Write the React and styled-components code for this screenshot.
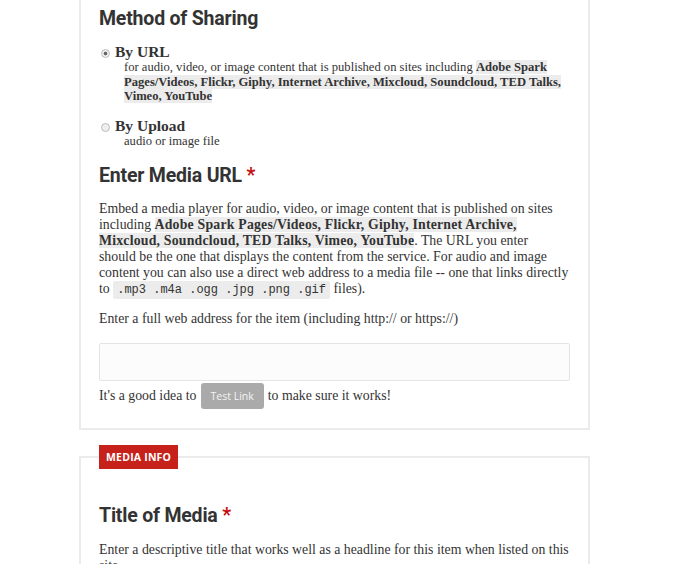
import React from "react";
import styled, { createGlobalStyle } from "styled-components";

const Global = createGlobalStyle`
  body {
    margin: 0;
    background: #fff;
    font-family: "Liberation Serif", "DejaVu Serif", serif;
    color: #333;
  }
`;

const Page = styled.div`
  width: 511px;
  margin: -34px 0 0 79px;
  display: flex;
  flex-direction: column;
  gap: 26px;
`;

const Card = styled.section`
  position: relative;
  border: 2px solid #ebebeb;
  padding: ${(p) => p.$pad || "20px 18px 18px 18px"};
`;

const Label = styled.div`
  position: absolute;
  top: -13px;
  left: 18px;
  background: #c7211b;
  color: #fff;
  font-family: "Open Sans", "Noto Sans", sans-serif;
  font-weight: 700;
  font-size: 10.5px;
  letter-spacing: 0.2px;
  padding: 0 7px;
  height: 24px;
  line-height: 24px;
`;

const Heading = styled.h2`
  font-family: Roboto, "Noto Sans", sans-serif;
  font-weight: 700;
  font-size: 19.5px;
  letter-spacing: -0.2px;
  color: #333;
  margin: ${(p) => p.$margin || "0 0 12px 0"};
  line-height: 26px;
`;

const Req = styled.span`
  color: #c40d0d;
`;

const Options = styled.div`
  display: flex;
  flex-direction: column;
  gap: 14px;
  margin-bottom: 15px;
`;

const Option = styled.label`
  display: grid;
  grid-template-columns: 14px 1fr;
  column-gap: 2px;
`;

const Radio = styled.span`
  width: 7px;
  height: 7px;
  margin: 5px 0 0 2px;
  border-radius: 50%;
  border: 1px solid #bbb;
  background: ${(p) => (p.$on ? "radial-gradient(circle, #666 0 1.6px, #eee 2.2px)" : "#eee")};
`;

const OptTitle = styled.div`
  font-weight: 700;
  font-size: 15.5px;
  line-height: 16px;
  color: #333;
`;

const OptHint = styled.div`
  grid-column: 2;
  padding-left: 9px;
  font-size: 12.6px;
  line-height: 14.5px;
  color: #333;
`;

const Mark = styled.strong`
  background: #ececec;
  font-weight: 700;
  letter-spacing: ${(p) => p.$spread || "0"};
`;

const Para = styled.p`
  margin: 0 0 ${(p) => p.$mb || "14px"} 0;
  font-size: 13.8px;
  line-height: 16px;
  color: #333;
  white-space: ${(p) => (p.$lines ? "nowrap" : "normal")};
`;

const Code = styled.code`
  font-family: "Liberation Mono", "DejaVu Sans Mono", monospace;
  font-size: 12px;
  background: #ececec;
  padding: 2px 4px;
  border-radius: 2px;
`;

const Input = styled.input`
  display: block;
  box-sizing: border-box;
  width: 100%;
  height: 38px;
  border: 1px solid #e4e4e4;
  border-radius: 2px;
  background: #fcfcfc;
  margin: 0 0 2px 0;
`;

const Row = styled.div`
  display: flex;
  align-items: center;
  gap: 4px;
  font-size: 13.8px;
  color: #333;
`;

const Button = styled.button`
  background: #aaaaaa;
  color: #f4f4f4;
  border: none;
  border-radius: 3px;
  font-family: "Open Sans", "Noto Sans", sans-serif;
  font-size: 10.5px;
  height: 26px;
  padding: 0 10px;
`;

const services = "Adobe Spark Pages/Videos, Flickr, Giphy, Internet Archive, Mixcloud, Soundcloud, TED Talks, Vimeo, YouTube";

export default function App() {
  return (
    <>
      <Global />
      <Page>
        <Card $pad="38px 18px 19px 18px">
          <Heading $margin="0 0 12px 0">Method of Sharing</Heading>
          <Options>
            <Option>
              <Radio $on />
              <OptTitle>By URL</OptTitle>
              <OptHint>
                for audio, video, or image content that is published on sites including <Mark>{services}</Mark>
              </OptHint>
            </Option>
            <Option>
              <Radio />
              <OptTitle>By Upload</OptTitle>
              <OptHint>audio or image file</OptHint>
            </Option>
          </Options>
          <Heading $margin="0 0 12px 0">
            Enter Media URL <Req>*</Req>
          </Heading>
          <Para $mb="13px" $lines>
            Embed a media player for audio, video, or image content that is published on sites
            <br />
            including <Mark $spread="0.2px">Adobe Spark Pages/Videos, Flickr, Giphy, Internet Archive,</Mark>
            <br />
            <Mark $spread="0.2px">Mixcloud, Soundcloud, TED Talks, Vimeo, YouTube</Mark>. The URL you enter
            <br />
            should be the one that displays the content from the service. For audio and image
            <br />
            content you can also use a direct web address to a media file -- one that links directly
            <br />
            to <Code>.mp3 .m4a .ogg .jpg .png .gif</Code> files).
          </Para>
          <Para $mb="16px">Enter a full web address for the item (including http:// or https://)</Para>
          <Input type="text" />
          <Row>
            It's a good idea to <Button>Test Link</Button> to make sure it works!
          </Row>
        </Card>
        <Card $pad="45px 18px 18px 18px">
          <Label>MEDIA INFO</Label>
          <Heading $margin="0 0 13px 0">
            Title of Media <Req>*</Req>
          </Heading>
          <Para>
            Enter a descriptive title that works well as a headline for this item when listed on this site.
          </Para>
        </Card>
      </Page>
    </>
  );
}
